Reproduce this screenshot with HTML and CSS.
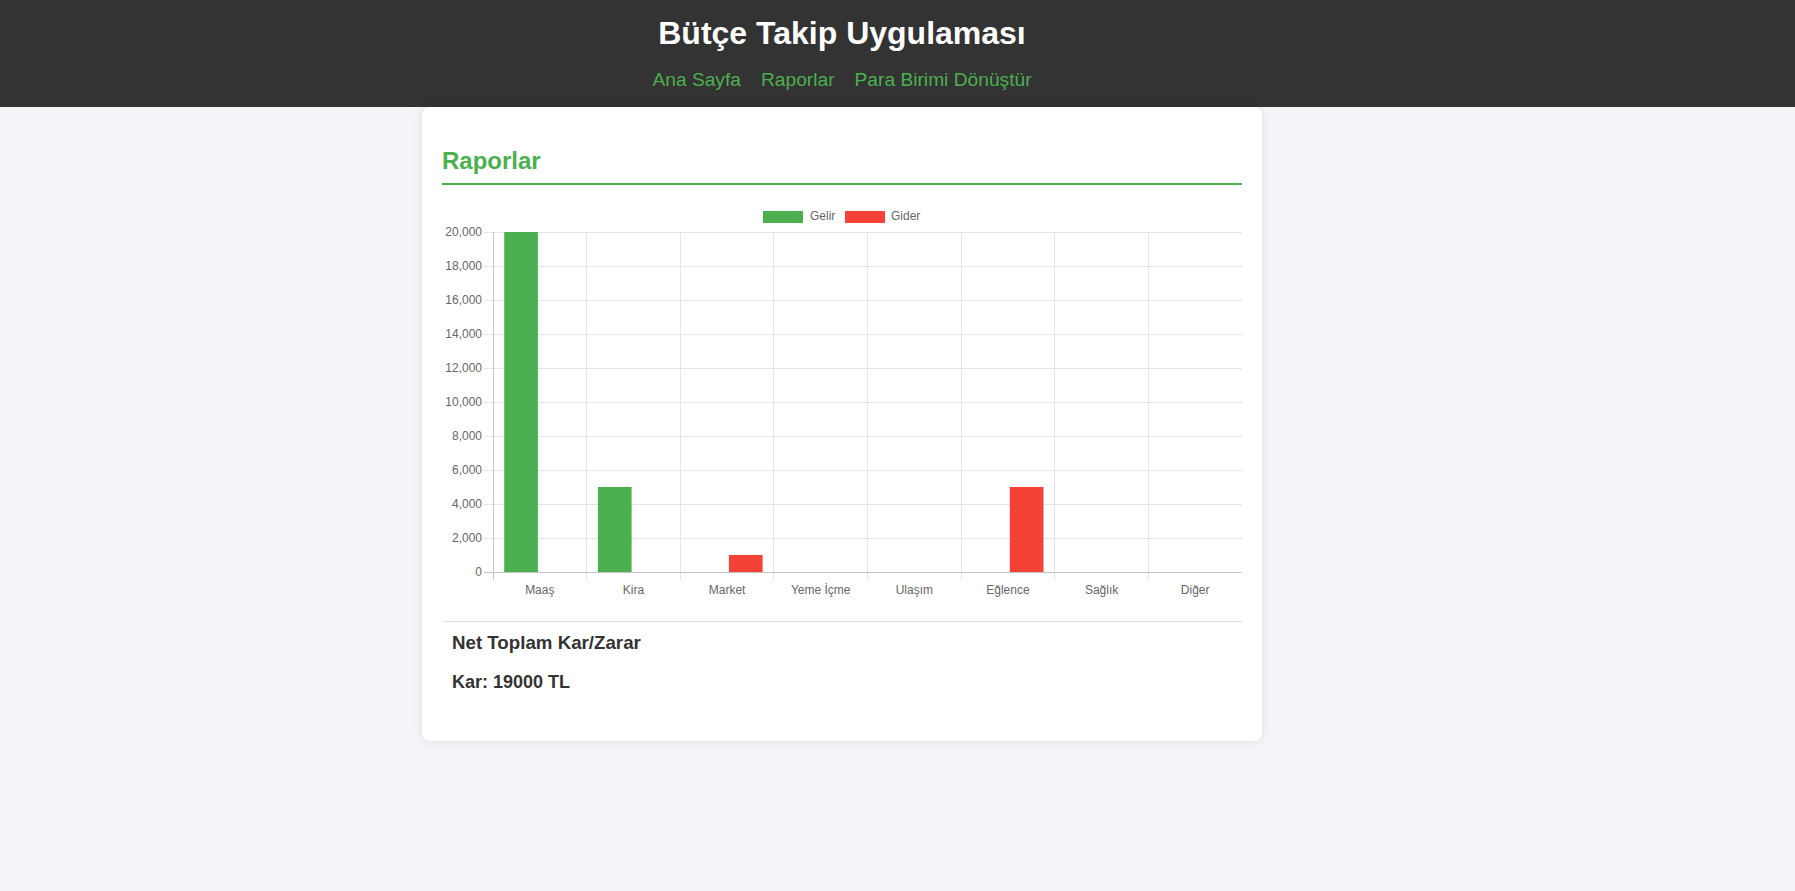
FILE: index.html
```html
<!DOCTYPE html>
<html lang="tr">
<head>
<meta charset="utf-8">
<title>Bütçe Takip Uygulaması</title>
<link rel="stylesheet" href="styles.css">
</head>
<body>
<header class="site-header">
  <div class="header-inner">
    <h1 class="site-title">Bütçe Takip Uygulaması</h1>
    <nav class="site-nav">
      <a href="#" class="nav-link">Ana Sayfa</a>
      <a href="#" class="nav-link">Raporlar</a>
      <a href="#" class="nav-link">Para Birimi Dönüştür</a>
    </nav>
  </div>
</header>
<main class="page">
  <section class="card">
    <h2 class="card-title">Raporlar</h2>
    <div class="chart">
      <svg class="chart-svg" width="800" height="426" viewBox="0 0 800 426" xmlns="http://www.w3.org/2000/svg">
        <g class="legend">
          <rect x="321" y="16" width="40" height="12" fill="#4caf50"/>
          <text x="368" y="25">Gelir</text>
          <rect x="403" y="16" width="40" height="12" fill="#f44336"/>
          <text x="449" y="25">Gider</text>
        </g>
        <g class="grid" shape-rendering="crispEdges">
          <line x1="42" y1="37.5" x2="800" y2="37.5"/>
          <line x1="42" y1="71.5" x2="800" y2="71.5"/>
          <line x1="42" y1="105.5" x2="800" y2="105.5"/>
          <line x1="42" y1="139.5" x2="800" y2="139.5"/>
          <line x1="42" y1="173.5" x2="800" y2="173.5"/>
          <line x1="42" y1="207.5" x2="800" y2="207.5"/>
          <line x1="42" y1="241.5" x2="800" y2="241.5"/>
          <line x1="42" y1="275.5" x2="800" y2="275.5"/>
          <line x1="42" y1="309.5" x2="800" y2="309.5"/>
          <line x1="42" y1="343.5" x2="800" y2="343.5"/>
          <line x1="144.6" y1="37" x2="144.6" y2="385"/>
          <line x1="238.25" y1="37" x2="238.25" y2="385"/>
          <line x1="331.9" y1="37" x2="331.9" y2="385"/>
          <line x1="425.5" y1="37" x2="425.5" y2="385"/>
          <line x1="519.1" y1="37" x2="519.1" y2="385"/>
          <line x1="612.75" y1="37" x2="612.75" y2="385"/>
          <line x1="706.4" y1="37" x2="706.4" y2="385"/>
        </g>
        <g class="bars">
          <rect x="62.2" y="37" width="33.7" height="340" fill="#4caf50"/>
          <rect x="155.9" y="292" width="33.7" height="85" fill="#4caf50"/>
          <rect x="286.9" y="360" width="33.7" height="17" fill="#f44336"/>
          <rect x="567.8" y="292" width="33.7" height="85" fill="#f44336"/>
        </g>
        <g class="axis" shape-rendering="crispEdges">
          <line x1="42" y1="377.5" x2="800" y2="377.5"/>
          <line x1="51.5" y1="37" x2="51.5" y2="385"/>
        </g>
        <g class="ylabels">
          <text x="40" y="41">20,000</text>
          <text x="40" y="75">18,000</text>
          <text x="40" y="109">16,000</text>
          <text x="40" y="143">14,000</text>
          <text x="40" y="177">12,000</text>
          <text x="40" y="211">10,000</text>
          <text x="40" y="245">8,000</text>
          <text x="40" y="279">6,000</text>
          <text x="40" y="313">4,000</text>
          <text x="40" y="347">2,000</text>
          <text x="40" y="381">0</text>
        </g>
        <g class="xlabels">
          <text x="97.8" y="398.5">Maaş</text>
          <text x="191.4" y="398.5">Kira</text>
          <text x="285.1" y="398.5">Market</text>
          <text x="378.7" y="398.5">Yeme İçme</text>
          <text x="472.3" y="398.5">Ulaşım</text>
          <text x="565.9" y="398.5">Eğlence</text>
          <text x="659.6" y="398.5">Sağlık</text>
          <text x="753.2" y="398.5">Diğer</text>
        </g>
      </svg>
    </div>
    <div class="summary">
      <h3 class="summary-title">Net Toplam Kar/Zarar</h3>
      <p class="summary-value">Kar: 19000 TL</p>
    </div>
  </section>
</main>
</body>
</html>
```

FILE: styles.css
```css
html, body {
  margin: 0;
  padding: 0;
}

body {
  background: #f4f4f9;
  font-family: "Liberation Sans", Arial, sans-serif;
  color: #333;
  min-height: 891px;
}

.site-header {
  background: #333;
  color: #fff;
}

.header-inner {
  width: 1684px;
  text-align: center;
  padding: 15px 0 16px;
}

.site-title {
  margin: 0;
  font-size: 32px;
  line-height: 37px;
  font-weight: bold;
  color: #fff;
}

.site-nav {
  margin-top: 17px;
  display: flex;
  justify-content: center;
  gap: 20px;
  font-size: 19.2px;
  line-height: 22px;
}

.nav-link {
  color: #4caf50;
  text-decoration: none;
}

.page {
  width: 1684px;
}

.card {
  width: 800px;
  margin: 0 auto;
  padding: 20px;
  background: #fff;
  border-radius: 8px;
  box-shadow: 0 0 10px rgba(0, 0, 0, 0.1);
}

.card-title {
  margin: 20px 0 10px;
  padding-bottom: 8px;
  font-size: 24px;
  line-height: 28px;
  color: #4caf50;
  border-bottom: 2px solid #4caf50;
}

.chart {
  height: 426px;
}

.chart-svg {
  display: block;
  font-family: "Liberation Sans", Arial, sans-serif;
  font-size: 12px;
}

.chart-svg text {
  fill: #666;
}

.grid line {
  stroke: #e5e5e5;
  stroke-width: 1;
}

.axis line {
  stroke: #c4c4c4;
  stroke-width: 1;
}

.ylabels text {
  text-anchor: end;
}

.xlabels text {
  text-anchor: middle;
}

.summary {
  border-top: 1px solid #ddd;
  padding: 10px;
}

.summary-title {
  margin: 0 0 18px;
  font-size: 18.72px;
  line-height: 22px;
  color: #333;
}

.summary-value {
  margin: 0 0 18px;
  font-size: 18px;
  line-height: 21px;
  font-weight: bold;
  color: #333;
}
```
